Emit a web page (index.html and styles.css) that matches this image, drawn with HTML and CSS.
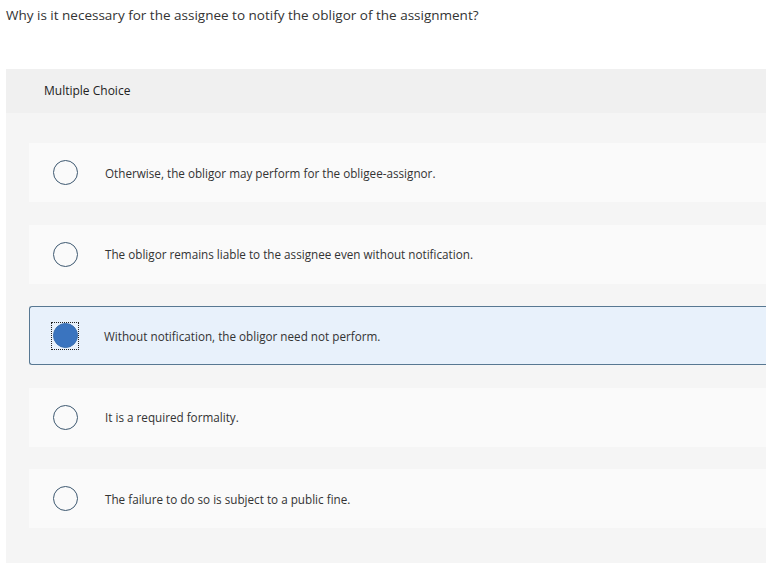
FILE: index.html
```html
<!DOCTYPE html>
<html lang="en">
<head>
  <meta charset="UTF-8">
  <title>Multiple Choice</title>
  <link rel="stylesheet" href="styles.css">
</head>
<body>
  <p class="question">Why is it necessary for the assignee to notify the obligor of the assignment?</p>

  <div class="panel">
    <div class="panel-header">Multiple Choice</div>
    <div class="choices">
      <label class="choice">
        <span class="radio"></span>
        <span class="choice-text">Otherwise, the obligor may perform for the obligee-assignor.</span>
      </label>
      <label class="choice">
        <span class="radio"></span>
        <span class="choice-text">The obligor remains liable to the assignee even without notification.</span>
      </label>
      <label class="choice selected">
        <span class="radio-focus"><span class="radio checked"></span></span>
        <span class="choice-text">Without notification, the obligor need not perform.</span>
      </label>
      <label class="choice">
        <span class="radio"></span>
        <span class="choice-text">It is a required formality.</span>
      </label>
      <label class="choice">
        <span class="radio"></span>
        <span class="choice-text">The failure to do so is subject to a public fine.</span>
      </label>
    </div>
  </div>
</body>
</html>
```

FILE: styles.css
```css
html, body {
  margin: 0;
  background: #ffffff;
}

body {
  font-family: 'Open Sans', 'Liberation Sans', sans-serif;
  color: #333333;
}

.question {
  margin: 0;
  padding: 6px 0 0 6px;
  height: 69px;
  box-sizing: border-box;
  font-size: 13.5px;
  letter-spacing: 0;
}

.panel {
  margin-left: 6px;
  background: #f5f5f5;
  padding-bottom: 40px;
}

.panel-header {
  height: 44px;
  line-height: 44px;
  padding-left: 38px;
  background: #f0f0f0;
  font-size: 12px;
  color: #222222;
}

.choices {
  display: flex;
  flex-direction: column;
  gap: 22.5px;
  padding: 30px 0 0 23px;
}

.choice {
  display: flex;
  align-items: center;
  height: 59px;
  box-sizing: border-box;
  padding-left: 23px;
  background: #fafafa;
  border: 1px solid transparent;
  border-right: none;
  cursor: pointer;
}

.choice.selected {
  background: #e8f1fb;
  border-color: #587892;
  border-radius: 3px 0 0 3px;
}

.radio {
  width: 25px;
  height: 25px;
  box-sizing: border-box;
  border: 1.5px solid #3d5870;
  border-radius: 50%;
  flex-shrink: 0;
}

.radio-focus {
  display: flex;
  margin-left: -2px;
  padding: 1px;
  outline: 1px dotted #222222;
  outline-offset: -1px;
  width: 28px;
  height: 28px;
  box-sizing: border-box;
  align-items: center;
  justify-content: center;
  flex-shrink: 0;
}

.radio.checked {
  background: #3a74bf;
  border-color: #3a6faf;
}

.choice-text {
  margin-left: 27px;
  font-size: 11.7px;
  color: #333333;
}

.selected .choice-text {
  margin-left: 25px;
}
```
